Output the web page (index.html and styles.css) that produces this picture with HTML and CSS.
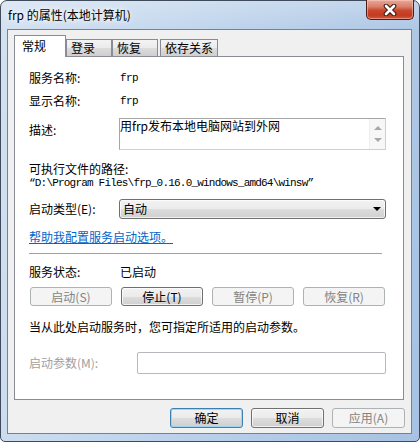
FILE: index.html
```html
<!DOCTYPE html>
<html lang="zh-CN">
<head>
<meta charset="utf-8">
<title>frp 的属性(本地计算机)</title>
<link rel="stylesheet" href="styles.css">
</head>
<body>
<div class="window">
  <div class="titlebar">
    <span class="title">frp 的属性(本地计算机)</span>
    <div class="close">
      <svg width="14" height="12" viewBox="0 0 14 12">
        <path d="M3 2 L11 10 M11 2 L3 10" stroke="#3b1a12" stroke-width="4.6" stroke-linecap="round"/>
        <path d="M3 2 L11 10 M11 2 L3 10" stroke="#ffffff" stroke-width="2.6" stroke-linecap="round"/>
      </svg>
    </div>
  </div>
  <div class="client">
    <div class="tabs">
      <div class="tab active">常规</div>
      <div class="tab t-login">登录</div>
      <div class="tab t-recover">恢复</div>
      <div class="tab t-deps">依存关系</div>
    </div>
    <div class="panel">
      <div class="row r-name">
        <span class="lbl">服务名称:</span>
        <span class="val mono">frp</span>
      </div>
      <div class="row r-display">
        <span class="lbl">显示名称:</span>
        <span class="val mono">frp</span>
      </div>
      <div class="row r-desc">
        <span class="lbl lbl-top">描述:</span>
        <div class="textarea">
          <div class="ta-text">用frp发布本地电脑网站到外网</div>
          <div class="ta-scroll">
            <span class="arr-up"></span>
            <span class="arr-down"></span>
          </div>
        </div>
      </div>
      <div class="line r-pathlbl">可执行文件的路径:</div>
      <div class="line r-path mono path">“D:\Program Files\frp_0.16.0_windows_amd64\winsw”</div>
      <div class="row r-type">
        <span class="lbl">启动类型(E):</span>
        <div class="combo">
          <span class="combo-text">自动</span>
          <span class="combo-arrow"></span>
        </div>
      </div>
      <div class="line r-link"><span class="link">帮助我配置服务启动选项。</span></div>
      <div class="sep"></div>
      <div class="row r-status">
        <span class="lbl">服务状态:</span>
        <span class="val">已启动</span>
      </div>
      <div class="svc-buttons">
        <div class="btn disabled">启动(S)</div>
        <div class="btn">停止(T)</div>
        <div class="btn disabled">暂停(P)</div>
        <div class="btn disabled">恢复(R)</div>
      </div>
      <div class="line r-hint">当从此处启动服务时，您可指定所适用的启动参数。</div>
      <div class="row r-param">
        <span class="lbl lbl-wide dim">启动参数(M):</span>
        <div class="input"></div>
      </div>
    </div>
    <div class="dlg-buttons">
      <div class="btn dbtn default">确定</div>
      <div class="btn dbtn">取消</div>
      <div class="btn dbtn disabled">应用(A)</div>
    </div>
  </div>
</div>
</body>
</html>
```

FILE: styles.css
```css
html, body {
  margin: 0;
  padding: 0;
  width: 420px;
  height: 442px;
  overflow: hidden;
  background: #ffffff;
}

body {
  font-family: "Noto Sans CJK SC", "Noto Sans", sans-serif;
  font-size: 12px;
  color: #000;
}

.window {
  box-sizing: border-box;
  width: 420px;
  height: 442px;
  border: 1px solid #3f4b5a;
  border-radius: 7px 7px 5px 5px;
  background:
    linear-gradient(180deg, rgba(255,255,255,0.25) 0px, rgba(255,255,255,0) 30px),
    linear-gradient(100deg, #d3e1f1 0%, #c3d7ed 35%, #b3cbe7 70%, #a7c2e2 100%);
  display: flex;
  flex-direction: column;
  padding: 0 7px 7px 6px;
}

.titlebar {
  height: 28px;
  display: flex;
  align-items: flex-start;
  justify-content: space-between;
  margin: 0 -7px 0 -6px;
}

.title {
  margin-left: 7px;
  margin-top: 5px;
  line-height: 18px;
  color: #000;
  text-shadow: 0 0 5px #ffffff, 0 0 8px rgba(255,255,255,0.9);
}

.close {
  box-sizing: border-box;
  width: 48px;
  height: 20px;
  margin-top: -1px;
  margin-right: 5px;
  border: 1px solid #4a1e14;
  border-top: none;
  border-radius: 0 0 5px 5px;
  background: linear-gradient(180deg, #e9a897 0%, #d9806b 35%, #c9472d 55%, #c23b22 80%, #d1583b 100%);
  box-shadow: inset 0 0 0 1px rgba(255,220,210,0.45);
  display: flex;
  align-items: center;
  justify-content: center;
}

.client {
  box-sizing: border-box;
  height: 405px;
  border: 1px solid #6f8399;
  background: #f0f0f0;
  padding: 5px 6px 5px 6px;
  display: flex;
  flex-direction: column;
}

/* Tabs */
.tabs {
  height: 21px;
  display: flex;
  align-items: flex-end;
}

.tab {
  box-sizing: border-box;
  height: 17px;
  border: 1px solid #898c95;
  border-bottom: none;
  background: linear-gradient(180deg, #f3f3f3 0%, #ebebeb 50%, #dcdcdc 51%, #cfcfcf 100%);
  line-height: 16px;
  padding-left: 4px;
  white-space: nowrap;
}

.tab.active {
  height: 22px;
  width: 52px;
  margin-bottom: -1px;
  background: #ffffff;
  line-height: 20px;
  padding-left: 7px;
  position: relative;
  z-index: 1;
}

.t-login { width: 46px; margin-left: 0; }
.t-recover { width: 46px; margin-left: 0; }
.t-deps { width: 58px; margin-left: 2px; }

/* Panel */
.panel {
  box-sizing: border-box;
  width: 390px;
  height: 344px;
  border: 1px solid #898c95;
  background: #ffffff;
  padding: 13px 17px 0 14px;
}

.row {
  display: flex;
  align-items: center;
  height: 16px;
}

.lbl {
  width: 90px;
  flex: none;
  line-height: 16px;
  white-space: nowrap;
}

.lbl-wide { width: 108px; }

.val {
  padding-left: 1px;
  line-height: 16px;
}

.mono {
  font-family: "Liberation Mono", "DejaVu Sans Mono", monospace;
  font-size: 11px;
  letter-spacing: -0.6px;
}

.path { letter-spacing: -0.8px; }

.dim { color: #a0a0a0; }

.line {
  line-height: 15px;
  height: 15px;
  white-space: nowrap;
}

.r-display { margin-top: 7px; }

.r-desc {
  margin-top: 9px;
  height: 32px;
  align-items: flex-start;
}

.lbl-top { padding-top: 4px; }

.textarea {
  box-sizing: border-box;
  width: 267px;
  height: 32px;
  border: 1px solid #a6a6a6;
  border-right-color: #cfcfcf;
  border-bottom-color: #cfcfcf;
  background: #fff;
  display: flex;
}

.ta-text {
  flex: 1;
  line-height: 14px;
  padding-left: 0;
}

.ta-scroll {
  width: 16px;
  background: #f7f7f7;
  border-left: 1px solid #efefef;
  display: flex;
  flex-direction: column;
  align-items: center;
  justify-content: space-around;
  padding: 3px 0;
  box-sizing: border-box;
}

.arr-up, .arr-down {
  width: 0;
  height: 0;
  border-left: 4px solid transparent;
  border-right: 4px solid transparent;
}

.arr-up { border-bottom: 4px solid #a8a8a8; }
.arr-down { border-top: 4px solid #a8a8a8; }

.r-pathlbl { margin-top: 11px; }

.r-path {
  line-height: 15px;
}

.r-type {
  margin-top: 8px;
  height: 20px;
}

.combo {
  box-sizing: border-box;
  width: 267px;
  height: 20px;
  border: 1px solid #707070;
  border-radius: 3px;
  background: linear-gradient(180deg, #f2f2f2 0%, #ebebeb 50%, #dddddd 51%, #cfcfcf 100%);
  box-shadow: inset 0 0 0 1px rgba(255,255,255,0.7);
  display: flex;
  align-items: center;
  justify-content: space-between;
  padding: 0 4px 0 3px;
}

.combo-text { line-height: 18px; }

.combo-arrow {
  width: 0;
  height: 0;
  border-left: 4px solid transparent;
  border-right: 4px solid transparent;
  border-top: 4px solid #000;
}

.r-link {
  margin-top: 10px;
  height: 16px;
  line-height: 16px;
}

.link {
  color: #0066cc;
  text-decoration: underline;
}

.sep {
  margin-top: 8px;
  width: 353px;
  height: 0;
  border-top: 1px solid #a0a0a0;
}

.r-status { margin-top: 10px; }

.svc-buttons {
  margin-top: 7px;
  margin-left: 1px;
  width: 355px;
  display: grid;
  grid-template-columns: repeat(4, 1fr);
  column-gap: 9px;
}

.btn {
  box-sizing: border-box;
  height: 19px;
  border: 1px solid #707070;
  border-radius: 3px;
  background: linear-gradient(180deg, #f2f2f2 0%, #ebebeb 50%, #dddddd 51%, #cfcfcf 100%);
  box-shadow: inset 0 0 0 1px rgba(255,255,255,0.7);
  text-align: center;
  line-height: 17px;
  white-space: nowrap;
}

.btn.disabled {
  border-color: #adb2b5;
  background: #f4f4f4;
  box-shadow: none;
  color: #838383;
}

.r-hint {
  margin-top: 13px;
  height: 16px;
  line-height: 16px;
}

.r-param {
  margin-top: 17px;
  height: 22px;
}

.input {
  box-sizing: border-box;
  width: 249px;
  height: 22px;
  border: 1px solid #b5b9bd;
  border-radius: 2px;
  background: #fff;
}

/* Dialog buttons */
.dlg-buttons {
  margin-top: 8px;
  display: flex;
  justify-content: flex-end;
  gap: 8px;
}

.dbtn {
  width: 73px;
  height: 20px;
  line-height: 18px;
}

.btn.default {
  border-color: #3c7fb1;
  box-shadow: inset 0 0 0 1px #9fd5f5;
}
```
